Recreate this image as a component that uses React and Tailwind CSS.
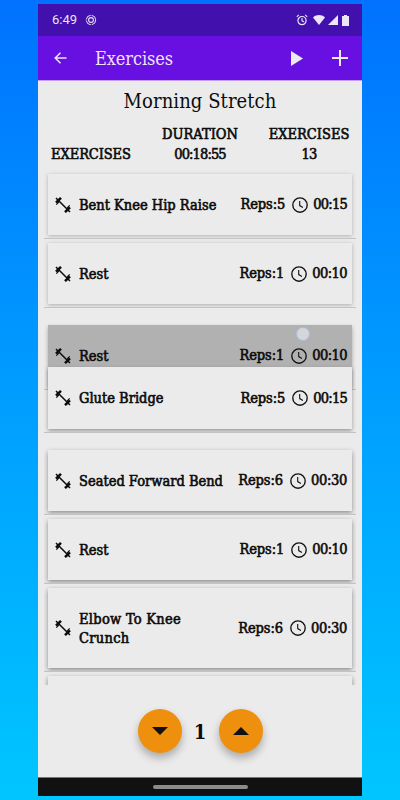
import React from "react";
import clsx from "clsx";

const exercises = [
  { id: 1, name: "Bent Knee Hip Raise", reps: 5, time: "00:15", row: "h-[69px]", card: "bg-[#ebebeb] shadow-[0_1px_4px_rgba(0,0,0,0.25)]" },
  { id: 2, name: "Rest", reps: 1, time: "00:10", row: "h-[69px]", card: "bg-[#ebebeb] shadow-[0_1px_4px_rgba(0,0,0,0.27)]" },
  { id: 3, name: "Rest", reps: 1, time: "00:10", row: "h-[69px] mt-[13px]", card: "bg-[#b1b1b1] shadow-[0_2px_4px_rgba(0,0,0,0.3)]" },
  { id: 4, name: "Glute Bridge", reps: 5, time: "00:15", row: "h-[70px] -mt-[27px]", card: "bg-[#ebebeb] shadow-[0_2px_4px_rgba(0,0,0,0.35)]", dragged: true },
  { id: 5, name: "Seated Forward Bend", reps: 6, time: "00:30", row: "h-[69px] mt-[13px]", card: "bg-[#ebebeb] shadow-[0_2px_5px_rgba(0,0,0,0.4)]" },
  { id: 6, name: "Rest", reps: 1, time: "00:10", row: "h-[69px]", card: "bg-[#ebebeb] shadow-[0_2px_5px_rgba(0,0,0,0.42)]" },
  { id: 7, name: "Elbow To Knee Crunch", reps: 6, time: "00:30", row: "h-[88px]", card: "bg-[#ebebeb] shadow-[0_2px_5px_rgba(0,0,0,0.42)]", nameClass: "tracking-[0.28px]" },
];

const timeTracking = {
  "00:15": "tracking-[-0.75px]",
  "00:10": "tracking-[-0.55px]",
  "00:30": "tracking-[-0.3px]",
};

function Dumbbell() {
  return (
    <svg viewBox="0 0 16 16" className="size-4 shrink-0" fill="none" stroke="#0b0b0b">
      <path d="M1 1l14 14" strokeWidth="1.5" />
      <path d="M1 5.6L6 .9M10 15.1l5-4.7" strokeWidth="2.6" />
      <path d="M1.3 7.6l2.5-2.5M12.2 10.9l2.5-2.5" strokeWidth="1.2" />
    </svg>
  );
}

function Clock() {
  return (
    <svg viewBox="0 0 16 16" className="size-4 shrink-0" fill="none" stroke="#111">
      <circle cx="8" cy="8" r="7.2" strokeWidth="1.35" />
      <path d="M7.7 4v4.6l3.2 1.8" strokeWidth="1.1" />
    </svg>
  );
}

function ExerciseRow({ item }) {
  return (
    <div
      className={clsx(
        "shrink-0 overflow-hidden border-b border-[#c3c3c3] px-1 pt-1 pb-[3px]",
        item.dragged && "relative z-10",
        item.row
      )}
    >
      <div className={clsx("flex h-full items-center pr-[5px] pl-[7px]", item.card)}>
        <Dumbbell />
        <span className={clsx("ml-2 w-[148px] pt-px text-[14.5px] leading-[19px]", item.nameClass)}>{item.name}</span>
        <div className="ml-auto flex items-center text-[14.5px] whitespace-nowrap">
          <span className="pt-px tracking-[-0.1px]">Reps:{item.reps}</span>
          <span className="mr-[5px] ml-[7px]">
            <Clock />
          </span>
          <span className={clsx("pt-px", timeTracking[item.time])}>{item.time}</span>
        </div>
      </div>
    </div>
  );
}

function StatusBar() {
  return (
    <div className="flex h-8 shrink-0 items-center bg-[#4110ad] pr-[13px] pl-[14px] text-[#ece5f8]">
      <span className="font-['Roboto'] text-[13px]">6:49</span>
      <svg viewBox="0 0 12 12" className="ml-2 size-3" fill="none" stroke="currentColor">
        <circle cx="6" cy="6" r="4.7" strokeWidth="1" strokeDasharray="6.4 1" />
        <circle cx="6" cy="6" r="2.4" strokeWidth="1.1" />
      </svg>
      <svg viewBox="0 0 12 12" className="ml-auto size-3" fill="none" stroke="currentColor">
        <circle cx="6" cy="6.6" r="4.1" strokeWidth="1.2" />
        <path d="M6 4v2.8l2 1M.8 2.8l2-1.9M11.2 2.8l-2-1.9" strokeWidth="1.1" />
      </svg>
      <svg viewBox="0 0 12 10" className="ml-[5px] h-[10px] w-3" fill="currentColor">
        <path d="M6 10L0 2.5C3.5-.7 8.5-.7 12 2.5z" />
      </svg>
      <svg viewBox="0 0 10 10" className="ml-[3px] size-[10px]" fill="currentColor">
        <path d="M10 0v10H0z" />
      </svg>
      <svg viewBox="0 0 7 11" className="ml-1 h-[11px] w-[7px]" fill="currentColor">
        <path d="M2 0h3v1h2v10H0V1h2z" />
      </svg>
    </div>
  );
}

function AppBar() {
  return (
    <div className="flex h-11 shrink-0 items-center bg-[#680fe2] pr-[14px] pl-4 text-[#ece5f8]">
      <svg viewBox="0 0 13 12" className="h-3 w-[13px]" fill="none" stroke="currentColor" strokeWidth="1.5">
        <path d="M12.5 6H1.2M6.5.7L1.2 6l5.3 5.3" />
      </svg>
      <h1 className="ml-7 pt-px text-[18px] tracking-[-0.08px]">Exercises</h1>
      <svg viewBox="0 0 12 15" className="ml-auto h-[15px] w-3" fill="#ebebeb">
        <path d="M0 0l12 7.5L0 15z" />
      </svg>
      <svg viewBox="0 0 16 16" className="ml-[29px] size-4" fill="none" stroke="#ebebeb" strokeWidth="2">
        <path d="M8 0v16M0 8h16" />
      </svg>
    </div>
  );
}

export default function App() {
  return (
    <div className="relative flex h-[800px] w-[400px] justify-center bg-linear-to-b from-[#0072ff] to-[#00c6ff] py-1 font-['Roboto_Slab','DejaVu_Serif_Condensed','DejaVu_Serif',serif] text-[#0b0b0b]">
      <div className="flex h-[792px] w-[324px] flex-col bg-[#ebebeb]">
        <StatusBar />
        <AppBar />

        <div className="h-[90px] shrink-0 border-t border-[#c39cf5]">
          <h2 className="pt-[5px] text-center text-[20px] leading-[30px] tracking-[0.08px]">Morning Stretch</h2>
          <div className="mt-[9px] flex items-end justify-between px-3 text-center text-[14.5px] leading-[19.5px] [-webkit-text-stroke:0.6px_#0b0b0b]">
            <div className="w-[82px] tracking-[-0.1px]">EXERCISES</div>
            <div className="w-[82px]">
              <div>DURATION</div>
              <div className="tracking-[-0.9px]">00:18:55</div>
            </div>
            <div className="w-[82px]">
              <div>EXERCISES</div>
              <div className="tracking-[-0.9px]">13</div>
            </div>
          </div>
        </div>

        <div className="mx-[6px] flex h-[515px] shrink-0 flex-col overflow-hidden [-webkit-text-stroke:0.6px_#0b0b0b]">
          {exercises.map((item) => (
            <ExerciseRow key={item.id} item={item} />
          ))}
          {/* top edge of the next card */}
          <div className="h-[13px] shrink-0 overflow-hidden px-1 pt-1">
            <div className="h-[61px] bg-[#ebebeb] shadow-[0_2px_5px_rgba(0,0,0,0.42)]" />
          </div>
        </div>

        <div className="flex flex-1 items-center justify-center">
          <button className="flex size-11 items-center justify-center rounded-full bg-[#ee8f0e] shadow-[0_5px_8px_rgba(0,0,0,0.28)]">
            <svg viewBox="0 0 16 8" className="h-2 w-4" fill="#111">
              <path d="M0 0h16L8 8z" />
            </svg>
          </button>
          <span className="w-[37px] pt-px text-center text-[20px] font-bold">1</span>
          <button className="flex size-11 items-center justify-center rounded-full bg-[#ee8f0e] shadow-[0_5px_8px_rgba(0,0,0,0.28)]">
            <svg viewBox="0 0 16 8" className="h-2 w-4" fill="#111">
              <path d="M0 8h16L8 0z" />
            </svg>
          </button>
        </div>

        <div className="flex h-[19px] shrink-0 items-center justify-center border-t border-[#777] bg-[#111]">
          <div className="h-1 w-[95px] rounded-full bg-[#8b8b8b]" />
        </div>
      </div>

      {/* touch point */}
      <div className="absolute top-[327px] left-[296px] size-[14px] rounded-full border border-[#a9bde8] bg-[#d6d6d8]" />
    </div>
  );
}
